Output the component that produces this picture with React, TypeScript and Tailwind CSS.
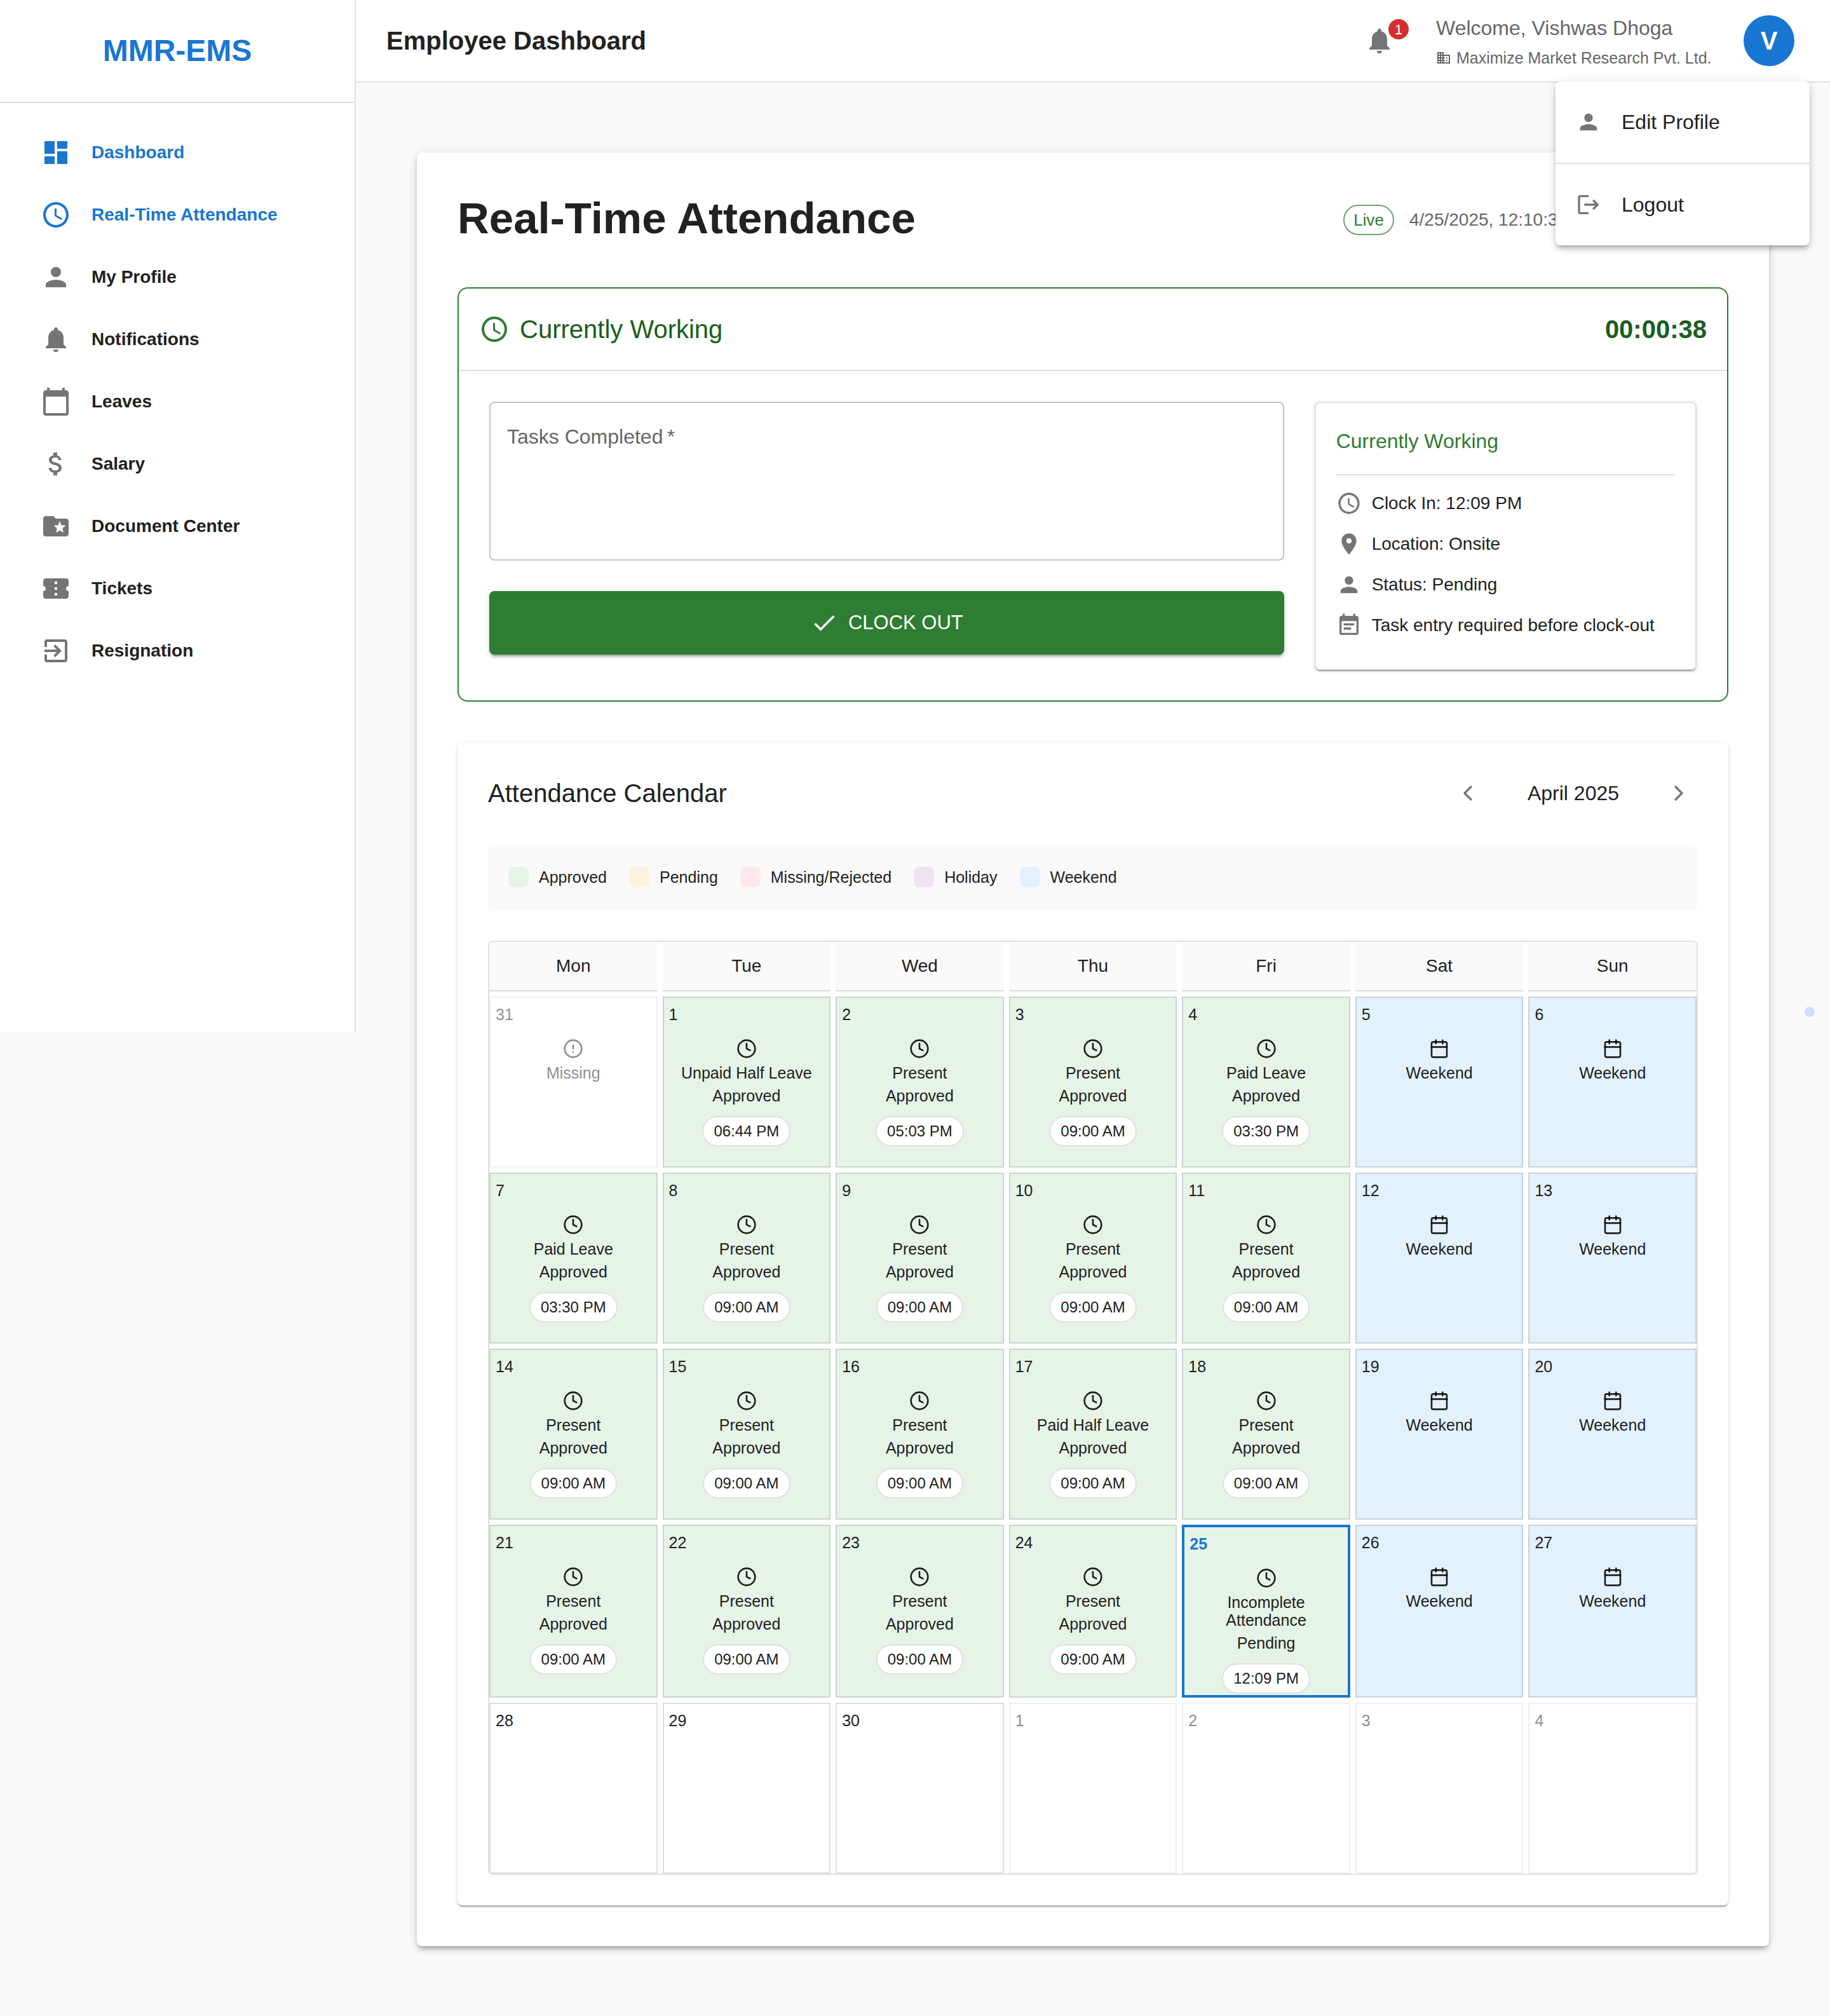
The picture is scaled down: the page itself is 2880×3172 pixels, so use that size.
import React from "react";
import type { IconType } from "react-icons";
import {
  MdAccessTime,
  MdAttachMoney,
  MdBusiness,
  MdCalendarToday,
  MdCheck,
  MdConfirmationNumber,
  MdDashboard,
  MdEventNote,
  MdExitToApp,
  MdFolderSpecial,
  MdLocationOn,
  MdLogout,
  MdNotifications,
  MdPerson,
} from "react-icons/md";
import { Calendar, ChevronLeft, ChevronRight, CircleAlert, Clock } from "lucide-react";

type NavItem = { label: string; icon: IconType; active?: boolean };

const navItems: NavItem[] = [
  { label: "Dashboard", icon: MdDashboard, active: true },
  { label: "Real-Time Attendance", icon: MdAccessTime, active: true },
  { label: "My Profile", icon: MdPerson },
  { label: "Notifications", icon: MdNotifications },
  { label: "Leaves", icon: MdCalendarToday },
  { label: "Salary", icon: MdAttachMoney },
  { label: "Document Center", icon: MdFolderSpecial },
  { label: "Tickets", icon: MdConfirmationNumber },
  { label: "Resignation", icon: MdExitToApp },
];

const statusItems: { label: string; icon: IconType }[] = [
  { label: "Clock In: 12:09 PM", icon: MdAccessTime },
  { label: "Location: Onsite", icon: MdLocationOn },
  { label: "Status: Pending", icon: MdPerson },
  { label: "Task entry required before clock-out", icon: MdEventNote },
];

const legend = [
  { label: "Approved", color: "bg-[#e6f4e7]" },
  { label: "Pending", color: "bg-[#fff1e0]" },
  { label: "Missing/Rejected", color: "bg-[#ffe9ec]" },
  { label: "Holiday", color: "bg-[#f1e3f4]" },
  { label: "Weekend", color: "bg-[#e3f1fd]" },
];

type Day = {
  date: number;
  kind: "work" | "weekend" | "missing" | "empty";
  label?: string;
  status?: string;
  time?: string;
  today?: boolean;
  outside?: boolean;
};

const work = (date: number, label = "Present", time = "09:00 AM", status = "Approved"): Day => ({
  date,
  kind: "work",
  label,
  status,
  time,
});
const weekend = (date: number): Day => ({ date, kind: "weekend", label: "Weekend" });
const empty = (date: number, outside = false): Day => ({ date, kind: "empty", outside });

const weeks: Day[][] = [
  [
    { date: 31, kind: "missing", label: "Missing", outside: true },
    work(1, "Unpaid Half Leave", "06:44 PM"),
    work(2, "Present", "05:03 PM"),
    work(3),
    work(4, "Paid Leave", "03:30 PM"),
    weekend(5),
    weekend(6),
  ],
  [work(7, "Paid Leave", "03:30 PM"), work(8), work(9), work(10), work(11), weekend(12), weekend(13)],
  [work(14), work(15), work(16), work(17, "Paid Half Leave"), work(18), weekend(19), weekend(20)],
  [
    work(21),
    work(22),
    work(23),
    work(24),
    { ...work(25, "Incomplete Attendance", "12:09 PM", "Pending"), today: true },
    weekend(26),
    weekend(27),
  ],
  [empty(28), empty(29), empty(30), empty(1, true), empty(2, true), empty(3, true), empty(4, true)],
];

const cellBackground = {
  work: "bg-[#e6f4e7]",
  weekend: "bg-[#e3f1fd]",
  missing: "bg-white",
  empty: "bg-white",
};

function DayCell({ day }: { day: Day }) {
  const Icon = day.kind === "work" ? Clock : day.kind === "weekend" ? Calendar : CircleAlert;
  return (
    <td
      className={`flex flex-col px-2 pt-2 pb-0.5 ${cellBackground[day.kind]} ${
        day.today ? "border-4 border-[#1976d2]" : "border-2 border-black/12"
      } ${day.outside ? "opacity-50" : ""}`}
    >
      <span
        className={`text-[25px] leading-9 ${day.today ? "font-bold text-[#1976d2]" : ""}`}
      >
        {day.date}
      </span>
      {day.label && (
        <div className="flex flex-col items-center pt-5 text-center text-[25px] leading-7">
          <Icon size={32} strokeWidth={2} className="text-black/87" aria-hidden />
          <span className="mt-2 max-w-[230px]">{day.label}</span>
          {day.status && <span className="mt-2">{day.status}</span>}
          {day.time && (
            <span className="mt-[18px] flex h-12 items-center rounded-full border-2 border-[#e0e0e0] bg-white px-4 text-2xl">
              {day.time}
            </span>
          )}
        </div>
      )}
    </td>
  );
}

function Sidebar() {
  return (
    <aside className="h-[1624px] w-[560px] shrink-0 border-r-2 border-[#e0e0e0] bg-white">
      <div className="flex h-[162px] items-center justify-center border-b-2 border-[#e0e0e0] text-5xl font-bold text-[#1976d2]">
        MMR-EMS
      </div>
      <nav className="flex flex-col gap-0.5 pt-[30px]">
        {navItems.map(({ label, icon: Icon, active }) => (
          <a
            key={label}
            href="#"
            className={`flex h-24 items-center gap-8 pl-16 text-[28px] font-bold ${
              active ? "text-[#1976d2]" : "text-[#212121]"
            }`}
          >
            <Icon size={48} className={active ? "" : "text-[#757575]"} aria-hidden />
            {label}
          </a>
        ))}
      </nav>
    </aside>
  );
}

function AccountMenu() {
  return (
    <div
      role="menu"
      className="absolute top-full right-8 z-10 w-[400px] divide-y-2 divide-[#e0e0e0] rounded-lg bg-white text-[32px] shadow-[0_6px_6px_-4px_rgba(0,0,0,0.2),0_6px_8px_rgba(0,0,0,0.14),0_2px_16px_rgba(0,0,0,0.12)]"
    >
      <button role="menuitem" type="button" className="flex h-[130px] w-full items-center gap-8 px-8">
        <MdPerson size={40} className="text-[#757575]" aria-hidden />
        Edit Profile
      </button>
      <button role="menuitem" type="button" className="flex h-32 w-full items-center gap-8 px-8">
        <MdLogout size={40} className="text-[#757575]" aria-hidden />
        Logout
      </button>
    </div>
  );
}

function Header() {
  return (
    <header className="relative flex h-[130px] items-center justify-between border-b-2 border-[#e0e0e0] bg-white pr-14 pl-12">
      <h1 className="text-[40px] font-bold">Employee Dashboard</h1>
      <div className="flex items-center">
        <button type="button" aria-label="Notifications, 1 unread" className="relative mr-[65px] text-[#757575]">
          <MdNotifications size={48} aria-hidden />
          <span className="absolute -top-2.5 -right-[22px] flex size-8 items-center justify-center rounded-full bg-[#d32f2f] text-[22px] text-white">
            1
          </span>
        </button>
        <div className="w-[444px] text-[#666666]">
          <p className="text-[32px] leading-12">Welcome, Vishwas Dhoga</p>
          <p className="mt-1.5 flex items-center gap-2 text-[25px] leading-[34px] whitespace-nowrap">
            <MdBusiness size={24} aria-hidden />
            Maximize Market Research Pvt. Ltd.
          </p>
        </div>
        <button
          type="button"
          aria-label="Account menu"
          className="ml-10 flex size-20 items-center justify-center rounded-full bg-[#1976d2] text-[40px] font-bold text-white"
        >
          V
        </button>
      </div>
      <AccountMenu />
    </header>
  );
}

function WorkPanel() {
  return (
    <section className="mt-16 rounded-2xl border-2 border-[#2e7d32]">
      <div className="flex h-[130px] items-center justify-between border-b-2 border-[#e0e0e0] px-8 text-[40px] text-[#1b5e20]">
        <h3 className="flex items-center gap-4">
          <MdAccessTime size={48} className="text-[#2e7d32]" aria-hidden />
          Currently Working
        </h3>
        <span className="font-bold">00:00:38</span>
      </div>
      <div className="grid grid-cols-12 gap-12 p-12">
        <form className="col-span-8 flex flex-col gap-12">
          <textarea
            aria-label="Tasks Completed"
            placeholder="Tasks Completed&#8201;*"
            required
            className="block h-[250px] w-full resize-none rounded-lg border-2 border-[#c4c4c4] px-[26px] py-[30px] text-[32px] leading-[46px] placeholder:text-[#666666] placeholder:opacity-100"
          />
          <button
            type="button"
            className="flex h-[100px] items-center justify-center gap-4 rounded-lg bg-[#2e7d32] text-[31px] text-white shadow-[0_6px_2px_-4px_rgba(0,0,0,0.2),0_4px_4px_rgba(0,0,0,0.14),0_2px_10px_rgba(0,0,0,0.12)]"
          >
            <MdCheck size={44} aria-hidden />
            CLOCK OUT
          </button>
        </form>
        <div className="col-span-4 rounded-lg border-2 border-[#e0e0e0] px-8 pt-8 pb-12 shadow-[0_4px_2px_-2px_rgba(0,0,0,0.2),0_2px_2px_rgba(0,0,0,0.14),0_2px_6px_rgba(0,0,0,0.12)]">
          <h4 className="border-b-2 border-[#e0e0e0] pb-6 text-[32px] leading-14 text-[#2e7d32]">
            Currently Working
          </h4>
          <ul className="flex flex-col gap-6 pt-6 text-[28px] leading-10">
            {statusItems.map(({ label, icon: Icon }) => (
              <li key={label} className="flex items-center gap-4">
                <Icon size={40} className="shrink-0 text-[#757575]" aria-hidden />
                {label}
              </li>
            ))}
          </ul>
        </div>
      </div>
    </section>
  );
}

function AttendanceCalendar() {
  return (
    <section className="mt-16 rounded-lg p-12 shadow-[0_4px_2px_-2px_rgba(0,0,0,0.2),0_2px_2px_rgba(0,0,0,0.14),0_2px_6px_rgba(0,0,0,0.12)]">
      <div className="flex h-16 items-center justify-between">
        <h3 className="text-[40px]">Attendance Calendar</h3>
        <div className="flex items-center gap-4 text-[32px]">
          <button type="button" aria-label="Previous month" className="flex size-15 items-center justify-center text-[#757575]">
            <ChevronLeft size={40} aria-hidden />
          </button>
          <span className="w-60 text-center">April 2025</span>
          <button type="button" aria-label="Next month" className="flex size-15 items-center justify-center text-[#757575]">
            <ChevronRight size={40} aria-hidden />
          </button>
        </div>
      </div>
      <ul className="mt-12 flex flex-wrap gap-[35px] rounded-lg bg-[#fafafa] p-8 text-[25px] leading-10">
        {legend.map(({ label, color }) => (
          <li key={label} className="flex items-center gap-4">
            <span className={`size-8 rounded-lg ${color}`} />
            {label}
          </li>
        ))}
      </ul>
      <table className="mt-12 grid grid-cols-7 gap-2 overflow-hidden rounded-lg border-2 border-[#e0e0e0]">
        <thead className="contents">
          <tr className="contents">
            {["Mon", "Tue", "Wed", "Thu", "Fri", "Sat", "Sun"].map((name) => (
              <th
                key={name}
                scope="col"
                className="flex h-[78px] items-center justify-center border-b-2 border-[#dcdcdc] bg-[#fafafa] text-[28px] font-normal"
              >
                {name}
              </th>
            ))}
          </tr>
        </thead>
        <tbody className="contents">
          {weeks.map((week) => (
            <tr key={week[0].date} className="contents *:min-h-[269px]">
              {week.map((day) => (
                <DayCell key={day.date} day={day} />
              ))}
            </tr>
          ))}
        </tbody>
      </table>
    </section>
  );
}

export default function App() {
  return (
    <div className="relative flex min-h-screen items-start bg-[#fafafa] font-['Liberation_Sans',Arial,sans-serif] text-[#212121]">
      <Sidebar />
      <div className="min-w-0 flex-1">
        <Header />
        <main className="px-24 pt-[110px] pb-[110px]">
          <div className="rounded-lg bg-white p-16 shadow-[0_6px_6px_-4px_rgba(0,0,0,0.2),0_6px_8px_rgba(0,0,0,0.14),0_2px_16px_rgba(0,0,0,0.12)]">
            <div className="flex items-center justify-between">
              <h2 className="pb-1 text-[69px] leading-20 font-bold">Real-Time Attendance</h2>
              <div className="flex items-center gap-6">
                <span className="flex h-12 items-center rounded-full border-2 border-[#2e7d32]/70 px-3.5 text-[26px] text-[#2e7d32]">
                  Live
                </span>
                <time className="w-[502px] text-[28px] text-[#666666]">4/25/2025, 12:10:38 PM</time>
              </div>
            </div>
            <WorkPanel />
            <AttendanceCalendar />
          </div>
        </main>
      </div>
      <span className="absolute top-[1584px] right-6 size-4 rounded-full bg-[#d0dff5]" />
    </div>
  );
}
